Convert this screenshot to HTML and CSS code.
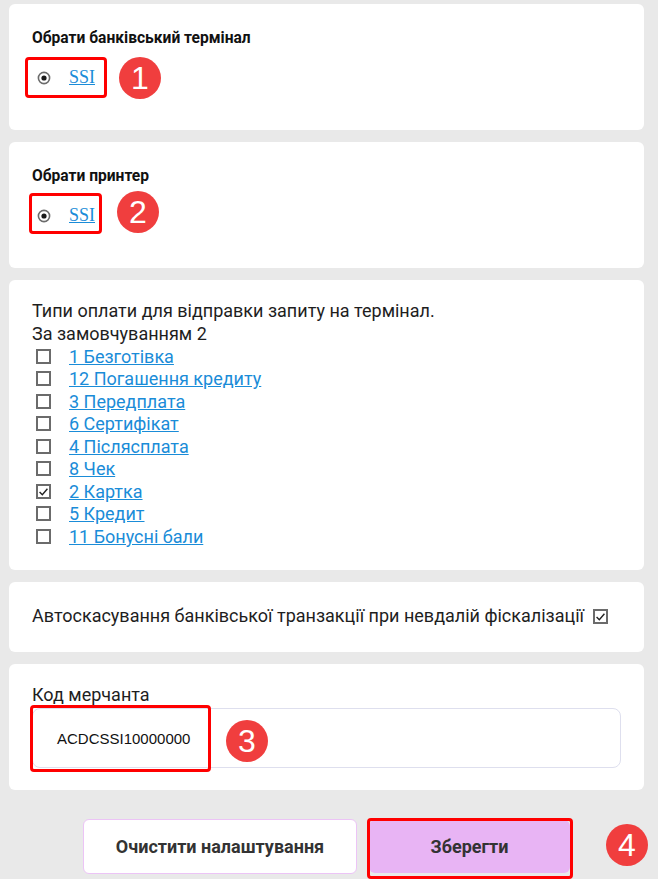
FILE: index.html
```html
<!DOCTYPE html>
<html lang="uk">
<head>
<meta charset="utf-8">
<link rel="stylesheet" href="styles.css">
</head>
<body>
<div class="page">
  <section class="card card-choice">
    <h3 class="card-title">Обрати банківський термінал</h3>
    <div class="choice-row">
      <span class="radio"><svg viewBox="0 0 14 14" width="14" height="14"><circle cx="7" cy="7" r="5.6" fill="#fff" stroke="#6b6b6b" stroke-width="1.6"/><circle cx="7" cy="7" r="2.6" fill="#1a1a1a"/></svg></span>
      <a class="serif-link" href="#">SSI</a>
    </div>
    <div class="mark mark-1"></div>
    <div class="badge badge-1">1</div>
  </section>

  <section class="card card-choice">
    <h3 class="card-title">Обрати принтер</h3>
    <div class="choice-row">
      <span class="radio"><svg viewBox="0 0 14 14" width="14" height="14"><circle cx="7" cy="7" r="5.6" fill="#fff" stroke="#6b6b6b" stroke-width="1.6"/><circle cx="7" cy="7" r="2.6" fill="#1a1a1a"/></svg></span>
      <a class="serif-link" href="#">SSI</a>
    </div>
    <div class="mark mark-2"></div>
    <div class="badge badge-2">2</div>
  </section>

  <section class="card card-list">
    <p class="text">Типи оплати для відправки запиту на термінал.</p>
    <p class="text">За замовчуванням 2</p>
    <ul class="pay-list">
      <li><span class="cb"></span><a href="#">1 Безготівка</a></li>
      <li><span class="cb"></span><a href="#">12 Погашення кредиту</a></li>
      <li><span class="cb"></span><a href="#">3 Передплата</a></li>
      <li><span class="cb"></span><a href="#">6 Сертифікат</a></li>
      <li><span class="cb"></span><a href="#">4 Післясплата</a></li>
      <li><span class="cb"></span><a href="#">8 Чек</a></li>
      <li><span class="cb checked"><svg viewBox="0 0 14 14" width="11" height="11"><path d="M2 7.5 L5.5 11 L12 3.5" fill="none" stroke="#222" stroke-width="1.8"/></svg></span><a href="#">2 Картка</a></li>
      <li><span class="cb"></span><a href="#">5 Кредит</a></li>
      <li><span class="cb"></span><a href="#">11 Бонусні бали</a></li>
    </ul>
  </section>

  <section class="card card-auto">
    <span class="text">Автоскасування банківської транзакції при невдалій фіскалізації</span>
    <span class="cb checked"><svg viewBox="0 0 14 14" width="11" height="11"><path d="M2 7.5 L5.5 11 L12 3.5" fill="none" stroke="#222" stroke-width="1.8"/></svg></span>
  </section>

  <section class="card card-merchant">
    <label class="text" for="merchant">Код мерчанта</label>
    <div class="input-box" id="merchant">ACDCSSI10000000</div>
    <div class="mark mark-3"></div>
    <div class="badge badge-3">3</div>
  </section>

  <div class="actions">
    <button class="btn btn-clear">Очистити налаштування</button>
    <div class="save-wrap">
      <button class="btn btn-save">Зберегти</button>
      <div class="mark mark-4"></div>
    </div>
    <div class="badge badge-4">4</div>
  </div>
</div>
</body>
</html>
```

FILE: styles.css
```css
* { box-sizing: border-box; }
html, body { margin: 0; padding: 0; }
body {
  background: #e9e9e9;
  font-family: Roboto, "Liberation Sans", sans-serif;
  color: #1e1e1e;
  width: 658px;
  height: 879px;
  overflow: hidden;
}
.page {
  padding: 4px 14px 0 9px;
}
.card {
  position: relative;
  background: #fff;
  border-radius: 6px;
  margin-bottom: 12px;
  padding: 0 23px;
}
.card-choice {
  height: 126px;
  padding-top: 25px;
}
.card-title {
  margin: 0;
  font-size: 15.6px;
  font-weight: 700;
  line-height: 18px;
  color: #111;
}
.choice-row {
  display: flex;
  align-items: center;
  height: 41px;
  margin-top: 10px;
}
.radio {
  display: inline-flex;
  margin-left: 5px;
  width: 14px;
  height: 14px;
}
.serif-link {
  margin-left: 18px;
  font-family: "Liberation Serif", serif;
  font-size: 18px;
  color: #1a8cd8;
  text-decoration: underline;
}
.mark {
  position: absolute;
  border: 3px solid #ff0000;
  border-radius: 4px;
  pointer-events: none;
}
.mark-1 { left: 16px; top: 53px; width: 82px; height: 41px; }
.mark-2 { left: 20px; top: 51px; width: 73px; height: 41px; }
.mark-3 { left: 21px; top: 41px; width: 181px; height: 67px; }
.mark-4 { left: -2px; top: -2px; right: -3px; bottom: -5px; }
.badge {
  position: absolute;
  width: 42px;
  height: 42px;
  border-radius: 50%;
  background: #f03e3e;
  color: #fff;
  font-family: "Liberation Sans", Arial, sans-serif;
  font-size: 32px;
  line-height: 42px;
  text-align: center;
}
.badge-1 { left: 110px; top: 53px; }
.badge-2 { left: 108px; top: 49px; }
.badge-3 { left: 217px; top: 56px; }
.badge-4 { left: 597px; top: 22px; }

.card-list {
  padding-top: 20px;
  padding-bottom: 22px;
}
.text {
  margin: 0;
  font-size: 18px;
  line-height: 22.5px;
  color: #1e1e1e;
}
.pay-list {
  list-style: none;
  margin: 0;
  padding: 0;
}
.pay-list li {
  display: flex;
  align-items: center;
  height: 22.5px;
  font-size: 18px;
}
.pay-list a {
  color: #1a8cd8;
  text-decoration: underline;
}
.cb {
  display: inline-flex;
  align-items: center;
  justify-content: center;
  width: 15px;
  height: 15px;
  border: 2px solid #6b6b6b;
  background: #fff;
  flex: none;
}
.pay-list .cb {
  margin-left: 4px;
  margin-right: 18px;
}

.card-auto {
  display: flex;
  align-items: center;
  height: 70px;
}
.card-auto .cb {
  margin-left: 9px;
}

.card-merchant {
  padding-top: 20px;
  padding-bottom: 22px;
}
.card-merchant label { display: block; }
.input-box {
  margin-top: 2px;
  height: 60px;
  border: 1px solid #dedfee;
  border-radius: 8px;
  padding-left: 24px;
  display: flex;
  align-items: center;
  font-family: "Liberation Sans", Arial, sans-serif;
  font-size: 15px;
  color: #111;
}

.actions {
  position: relative;
  display: flex;
  justify-content: center;
  gap: 12px;
  padding-top: 17px;
}
.btn {
  height: 55px;
  border-radius: 6px;
  font-family: Roboto, "Liberation Sans", sans-serif;
  font-size: 18px;
  font-weight: 700;
  color: #333;
  cursor: pointer;
}
.btn-clear {
  width: 274px;
  background: #fff;
  border: 1px solid #ecc4f6;
}
.save-wrap {
  position: relative;
  margin-top: 1px;
}
.btn-save {
  width: 201px;
  height: 53px;
  background: #e8b4f4;
  border: none;
}
```
